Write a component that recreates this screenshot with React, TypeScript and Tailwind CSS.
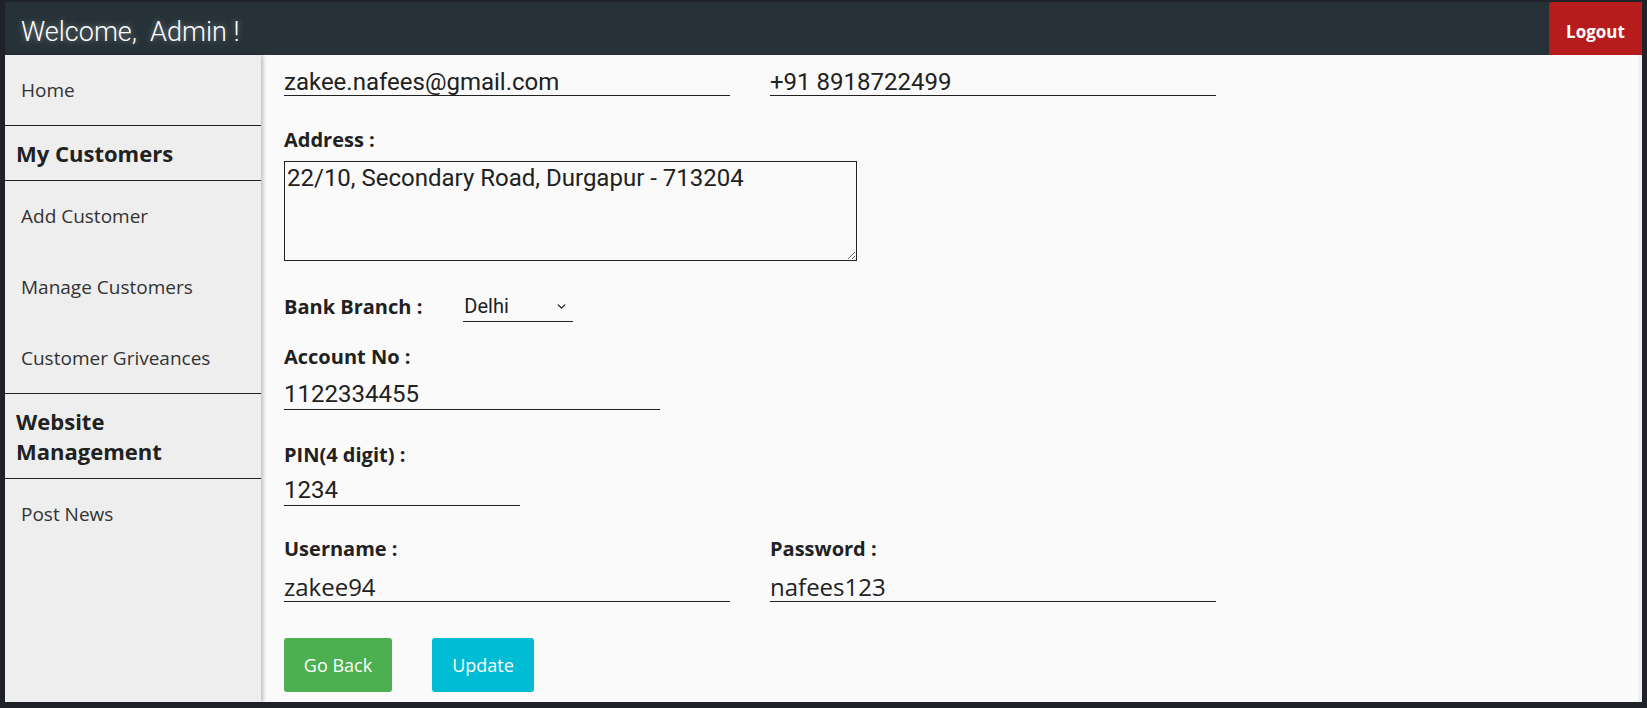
import { ChevronDown } from "lucide-react";

const sidebar = [
  { type: "link", name: "Home" },
  { type: "heading", name: "My Customers" },
  { type: "link", name: "Add Customer" },
  { type: "link", name: "Manage Customers" },
  { type: "link", name: "Customer Griveances" },
  { type: "heading", name: "Website Management" },
  { type: "link", name: "Post News" },
];

function Label({ children }: { children: React.ReactNode }) {
  return (
    <label className="block text-[20px] font-bold leading-[28px] text-[#212121]">
      {children}
    </label>
  );
}

function LineInput({
  value,
  width,
  className = "",
}: {
  value: string;
  width: string;
  className?: string;
}) {
  return (
    <input
      defaultValue={value}
      className={`block h-[31px] border-b border-[#212121] bg-transparent p-0 text-[24px] leading-[30px] text-[#212121] outline-none ${width} ${className}`}
    />
  );
}

export default function App() {
  return (
    <div className="flex h-screen flex-col bg-[#1f2229] pt-[2px] pr-[5px] pb-[6px] pl-[5px] font-['Open_Sans',sans-serif]">
      {/* Header */}
      <header className="flex h-[53px] shrink-0 items-stretch justify-between bg-[#263238]">
        <h1 className="flex items-center pt-[7px] pl-4 font-['Roboto',sans-serif] text-[27px] font-light text-white [text-shadow:0_0_6px_rgba(255,255,255,0.45)]">
          Welcome,&nbsp; Admin !
        </h1>
        <button className="flex w-[93px] items-center justify-center rounded-tl-[3px] bg-[#b71c1c] pt-[6px] text-[17px] font-bold text-white">
          Logout
        </button>
      </header>

      <div className="flex min-h-0 flex-1">
        {/* Sidebar */}
        <aside className="relative z-10 w-[256px] shrink-0 bg-[#eeeeee] shadow-[2px_0_4px_rgba(0,0,0,0.25)]">
          {sidebar.map((item, i) => {
            const last = i === sidebar.length - 1;
            if (item.type === "heading") {
              return (
                <div
                  key={item.name}
                  className="border-b border-[#212121] py-3 pr-10 pl-[11px] text-[22px] font-bold leading-[30px] text-[#212121]"
                >
                  {item.name}
                </div>
              );
            }
            const nextHeading = sidebar[i + 1]?.type === "heading";
            return (
              <a
                key={item.name}
                href="#"
                className={`flex h-[71px] items-center pl-4 text-[19px] text-[#333333] ${
                  nextHeading && !last ? "border-b border-[#212121]" : ""
                }`}
              >
                {item.name}
              </a>
            );
          })}
        </aside>

        {/* Form */}
        <main className="flex-1 overflow-hidden border-r-4 border-[#f0f0f0] bg-[#fafafa] pl-[23px]">
          <div className="mt-[10px] flex gap-10">
            <LineInput
              value="zakee.nafees@gmail.com"
              width="w-[446px]"
              className="pt-[4px] font-['Roboto',sans-serif]"
            />
            <LineInput
              value="+91 8918722499"
              width="w-[446px]"
              className="pt-[4px] font-['Roboto',sans-serif]"
            />
          </div>

          <div className="mt-[30px]">
            <Label>Address :</Label>
            <textarea
              defaultValue="22/10, Secondary Road, Durgapur - 713204"
              className="mt-[7px] block h-[100px] w-[573px] border border-[#212121] bg-transparent px-[2px] py-[2px] font-['Roboto',sans-serif] text-[24px] leading-[28px] text-[#212121] outline-none"
            />
          </div>

          <div className="mt-[30px] flex items-center">
            <Label>Bank Branch :</Label>
            <div className="ml-[41px] flex h-[31px] w-[110px] items-center justify-between border-b border-[#212121] pr-[5px] pl-[1px] font-['Roboto',sans-serif] text-[20px] text-[#212121]">
              Delhi
              <ChevronDown size={13} strokeWidth={2.5} />
            </div>
          </div>

          <div className="mt-[21px]">
            <Label>Account No :</Label>
            <LineInput
              value="1122334455"
              width="w-[376px]"
              className="mt-[8px] font-['Roboto',sans-serif]"
            />
          </div>

          <div className="mt-[31px]">
            <Label>PIN(4 digit) :</Label>
            <LineInput
              value="1234"
              width="w-[236px]"
              className="mt-[6px] font-['Roboto',sans-serif]"
            />
          </div>

          <div className="mt-[29px] flex gap-10">
            <div>
              <Label>Username :</Label>
              <LineInput value="zakee94" width="w-[446px]" className="mt-[8px]" />
            </div>
            <div>
              <Label>Password :</Label>
              <LineInput value="nafees123" width="w-[446px]" className="mt-[8px]" />
            </div>
          </div>

          <div className="mt-[36px] flex gap-10">
            <button className="h-[54px] w-[108px] rounded-[3px] bg-[#4caf50] text-[18px] text-white">
              Go Back
            </button>
            <button className="h-[54px] w-[102px] rounded-[3px] bg-[#00bcd4] text-[18px] text-white">
              Update
            </button>
          </div>
        </main>
      </div>
    </div>
  );
}
